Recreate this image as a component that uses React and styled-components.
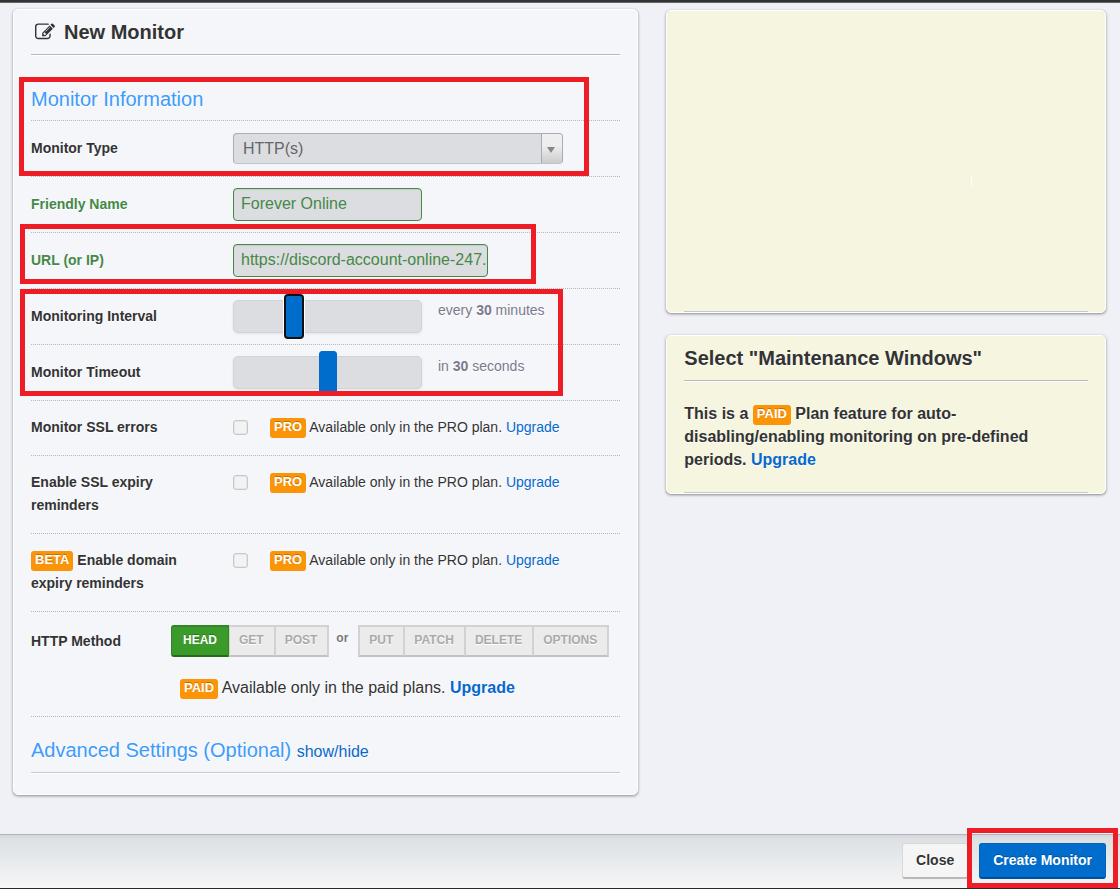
import React, { useState } from "react";
import styled, { createGlobalStyle, css } from "styled-components";

const GlobalStyle = createGlobalStyle`
  *, *::before, *::after { box-sizing: border-box; }
  body {
    margin: 0;
    background: #f0f1f6;
    color: #333;
    font: 14px/23px "Liberation Sans", Arial, sans-serif;
    text-shadow: 0 1px 0 #fff;
  }
  button, input, select { font-family: inherit; }
`;

const Page = styled.div`
  min-height: 100vh;
  display: flex;
  flex-direction: column;
`;

const TopBar = styled.header`
  height: 3px;
  background: #333;
  border-bottom: 1px solid #666;
`;

const Main = styled.main`
  flex: 1;
  display: grid;
  grid-template-columns: minmax(0, 64fr) minmax(0, 45fr);
  gap: 28px;
  align-items: start;
  padding: 6px 14px 24px 13px;
`;

const Card = styled.section`
  padding: 0 17px;
  background: ${(p) => (p.$tone === "note" ? "#f5f5e0" : "#f5f6fa")};
  border: 1px solid #fff;
  border-radius: 5px;
  box-shadow: 0 1px 3px rgba(0, 0, 0, 0.45);
`;

const FormCard = styled(Card).attrs({ as: "form" })`
  padding-bottom: 21px;
`;

const Aside = styled.aside`
  display: grid;
  gap: 22px;
  padding-top: 1px;
`;

const CardTitle = styled.h1`
  display: flex;
  align-items: center;
  gap: 9px;
  margin: 0;
  padding-left: ${(p) => (p.$icon ? "4px" : "0")};
  font-size: 20px;
  font-weight: bold;
  line-height: 44px;
`;

const Rule = styled.hr`
  height: 1px;
  margin: 0;
  border: 0;
  background: ${(p) => (p.$soft ? "#c6c8cd" : "#b8b9bb")};
  box-shadow: 0 1px 0 #fff;
`;

const EmptyNote = styled.div`
  position: relative;
  min-height: 300px;

  &::after {
    content: "";
    position: absolute;
    top: 166px;
    left: 71%;
    width: 1px;
    height: 9px;
    background: #fff;
  }
`;

const NoteText = styled.p`
  margin: 0;
  padding: 21px 0;
  font-size: 16px;
  font-weight: bold;
`;

const SectionTitle = styled.h2`
  margin: 0;
  padding-top: 2px;
  color: #3d9bfb;
  font-size: 20px;
  font-weight: normal;
  line-height: 41px;
`;

const Group = styled.div`
  position: relative;
`;

const FirstGroup = styled(Group)`
  margin-top: 22px;
`;

const Highlight = styled.span`
  position: absolute;
  inset: ${(p) => p.$inset};
  border: 5px solid #ee1c25;
  pointer-events: none;
`;

const Row = styled.div`
  display: flex;
  align-items: center;
  min-height: 56px;
  border-top: 1px dotted #b5b7bd;
`;

const CheckRow = styled(Row)`
  align-items: flex-start;
  min-height: 0;
  padding: 15px 0 16px;
`;

const Label = styled.label`
  flex: none;
  width: 202px;
  padding-right: 50px;
  font-weight: bold;
  color: ${(p) => (p.$valid ? "#468847" : "#333")};
`;

const fieldLook = css`
  background: #dcdde0;
  border-radius: 4px;
  font-size: 16px;
`;

const TextInput = styled.input`
  ${fieldLook}
  width: ${(p) => (p.$wide ? "255px" : "189px")};
  height: 33px;
  padding: 0 1px 1px 7px;
  border: 1px solid #468847;
  color: #468847;
  box-shadow: inset 0 1px 1px rgba(0, 0, 0, 0.08);
  text-shadow: none;
`;

const SelectBox = styled.div`
  position: relative;
  width: 330px;
  height: 31px;
`;

const Select = styled.select`
  ${fieldLook}
  appearance: none;
  width: 100%;
  height: 100%;
  padding: 0 30px 0 9px;
  border: 1px solid #a9abb8;
  border-bottom-color: #c2c4cc;
  color: #666;
  text-shadow: none;
`;

const SelectArrow = styled.span`
  position: absolute;
  inset: 1px 1px 1px auto;
  display: flex;
  align-items: center;
  justify-content: center;
  width: 21px;
  padding-right: 2px;
  padding-top: 3px;
  border-left: 1px solid #a9abb8;
  border-radius: 0 3px 3px 0;
  background: linear-gradient(#eee 40%, #ccc);
  pointer-events: none;
`;

const Slider = styled.input`
  appearance: none;
  width: 189px;
  height: 33px;
  margin: 0;
  background: #dcdde0;
  border: 1px solid #d2d3d6;
  border-radius: 5px;
  box-shadow: 0 1px 3px rgba(0, 0, 0, 0.08);

  &::-webkit-slider-runnable-track {
    height: 31px;
  }
  &::-webkit-slider-thumb {
    appearance: none;
    width: 18px;
    height: 43px;
    margin-top: -6px;
    background: #006dcc;
    border: 1px solid ${(p) => (p.$active ? "#101010" : "#006dcc")};
    border-radius: 3px;
    box-shadow: ${(p) => (p.$active ? "0 0 0 1px #101010, 0 0 0 2px #fff" : "none")};
  }
`;

const Hint = styled.span`
  align-self: flex-start;
  margin: 10px 0 0 16px;
  color: #7a7a8c;
`;

const CheckBox = styled.input`
  appearance: none;
  flex: none;
  width: 15px;
  height: 15px;
  margin: 4px 22px 0 0;
  background: #f3f3f4;
  border: 1px solid #c8c8ca;
  border-radius: 3px;
  box-shadow: inset 0 0 0 1px #e6e6e8;
`;

const Badge = styled.span`
  display: inline-block;
  height: 20px;
  padding: 0 4px;
  border-radius: 3px;
  background: #fb9407;
  color: #fff;
  font-size: 13px;
  font-weight: bold;
  line-height: 17px;
  text-shadow: 0 -1px 0 rgba(0, 0, 0, 0.25);
  vertical-align: middle;
`;

const Link = styled.a`
  color: #0768cd;
  font-weight: ${(p) => (p.$strong ? "bold" : "normal")};
  text-decoration: none;
`;

const ShowHide = styled(Link)`
  font-size: 16px;
`;

const MethodRow = styled(Row)`
  flex-direction: column;
  align-items: stretch;
  padding: 13px 0 17px;
`;

const MethodLine = styled.div`
  display: flex;
  align-items: center;
`;

const MethodLabel = styled.span`
  flex: none;
  width: 140px;
  font-weight: bold;
`;

const Methods = styled.div`
  display: flex;
`;

const Method = styled.button`
  height: 32px;
  padding: 0 ${(p) => (p.$on ? "11px 2px" : "10px 2px 9px")};
  border: 1px solid ${(p) => (p.$on ? "#328526" : "#d2d2d2")};
  border-width: 2px 1px;
  border-bottom-color: ${(p) => (p.$on ? "#27691d" : "#c2c2c2")};
  background: ${(p) => (p.$on ? "#3a9b2a" : "#ebebeb")};
  color: ${(p) => (p.$on ? "#fff" : "#aaa")};
  font-size: 12px;
  font-weight: bold;
  text-shadow: ${(p) => (p.$on ? "0 -1px 0 rgba(0, 0, 0, 0.25)" : "0 1px 0 #fff")};

  &:first-child {
    border-left-width: ${(p) => (p.$on ? "1px" : "2px")};
    border-radius: ${(p) => (p.$on ? "3px 0 0 3px" : "0")};
  }
  &:last-child { border-right-width: 2px; }
`;

const Or = styled.span`
  margin: 0 10px 6px 7px;
  color: #777;
  font-size: 12px;
  font-weight: bold;
  line-height: 20px;
`;

const PlanNote = styled.p`
  margin: 19px 0 0 149px;
  font-size: 16px;
`;

const Advanced = styled.div`
  padding-top: 11px;
  border-top: 1px dotted #b5b7bd;
`;

const Footer = styled.footer`
  display: flex;
  justify-content: flex-end;
  gap: 11px;
  padding: 8px 14px 9px;
  border-top: 1px solid #b3b4b9;
  border-bottom: 1px solid #2b2a2b;
  background: linear-gradient(#d3d7da, #dde1e4 4px, #f5f6f7);
`;

const FooterButton = styled.button`
  height: 36px;
  padding: 0 13px 1px;
  border: 1px solid ${(p) => (p.$primary ? "#0062b8" : "#d8d8d8")};
  border-bottom: 2px solid ${(p) => (p.$primary ? "#004f9e" : "#b8b8b8")};
  border-radius: 3px;
  background: ${(p) => (p.$primary ? "#006dcc" : "#f5f5f5")};
  color: ${(p) => (p.$primary ? "#fff" : "#333")};
  font-size: 14px;
  font-weight: bold;
  text-shadow: ${(p) => (p.$primary ? "0 -1px 0 rgba(0, 0, 0, 0.25)" : "0 1px 0 #fff")};
`;

function EditIcon() {
  return (
    <svg width="20" height="20" viewBox="0 0 1792 1792" fill="#333" aria-hidden="true">
      <path d="M888 1184l116-116-152-152-116 116v56h96v96h56zm440-720q-16-16-33 1l-350 350q-17 17-1 33t33-1l350-350q17-17 1-33zm80 594v190q0 119-84.5 203.5t-203.5 84.5h-832q-119 0-203.5-84.5t-84.5-203.5v-832q0-119 84.5-203.5t203.5-84.5h832q63 0 117 25 15 7 18 23 3 17-9 29l-49 49q-14 14-32 8-23-6-45-6h-832q-66 0-113 47t-47 113v832q0 66 47 113t113 47h832q66 0 113-47t47-113v-126q0-13 9-22l64-64q15-15 35-7t20 29zm-96-738l288 288-672 672h-288v-288zm444 132l-92 92-288-288 92-92q28-28 68-28t68 28l152 152q28 28 28 68t-28 68z" />
    </svg>
  );
}

function ProCheck({ id, children }) {
  return (
    <CheckRow>
      <Label htmlFor={id}>{children}</Label>
      <CheckBox id={id} type="checkbox" disabled />
      <span>
        <Badge>PRO</Badge> Available only in the PRO plan. <Link href="#upgrade">Upgrade</Link>
      </span>
    </CheckRow>
  );
}

export default function App() {
  const [name, setName] = useState("Forever Online");
  const [url, setUrl] = useState("https://discord-account-online-247.");
  const [interval, setIntervalValue] = useState(30);
  const [timeout, setTimeoutValue] = useState(30);

  return (
    <>
      <GlobalStyle />
      <Page>
        <TopBar />
        <Main>
          <FormCard id="monitor-form" onSubmit={(e) => e.preventDefault()}>
            <CardTitle $icon>
              <EditIcon />
              New Monitor
            </CardTitle>
            <Rule />
            <FirstGroup>
              <SectionTitle>Monitor Information</SectionTitle>
              <Row>
                <Label htmlFor="type">Monitor Type</Label>
                <SelectBox>
                  <Select id="type">
                    <option>HTTP(s)</option>
                  </Select>
                  <SelectArrow>
                    <svg width="8" height="6" viewBox="0 0 8 6" aria-hidden="true">
                      <path d="M0 0h8L4 6z" fill="#888" />
                    </svg>
                  </SelectArrow>
                </SelectBox>
              </Row>
              <Highlight $inset="0 31px 0 -12px" />
            </FirstGroup>
            <Row>
              <Label htmlFor="name" $valid>Friendly Name</Label>
              <TextInput id="name" value={name} onChange={(e) => setName(e.target.value)} />
            </Row>
            <Group>
              <Row>
                <Label htmlFor="url" $valid>URL (or IP)</Label>
                <TextInput id="url" $wide value={url} onChange={(e) => setUrl(e.target.value)} />
              </Row>
              <Highlight $inset="-8px 84px 4px -11px" />
            </Group>
            <Group>
              <Row>
                <Label htmlFor="interval">Monitoring Interval</Label>
                <Slider
                  id="interval" type="range" min="0" max="100" $active
                  value={interval} onChange={(e) => setIntervalValue(Number(e.target.value))}
                />
                <Hint>every <b>{interval}</b> minutes</Hint>
              </Row>
              <Row>
                <Label htmlFor="timeout">Monitor Timeout</Label>
                <Slider
                  id="timeout" type="range" min="0" max="60"
                  value={timeout} onChange={(e) => setTimeoutValue(Number(e.target.value))}
                />
                <Hint>in <b>{timeout}</b> seconds</Hint>
              </Row>
              <Highlight $inset="1px 57px 4px -11px" />
            </Group>
            <ProCheck id="ssl-errors">Monitor SSL errors</ProCheck>
            <ProCheck id="ssl-expiry">Enable SSL expiry reminders</ProCheck>
            <ProCheck id="domain-expiry"><Badge>BETA</Badge> Enable domain expiry reminders</ProCheck>
            <MethodRow>
              <MethodLine>
                <MethodLabel id="method-label">HTTP Method</MethodLabel>
                <Methods role="group" aria-labelledby="method-label">
                  <Method type="button" $on>HEAD</Method>
                  <Method type="button" disabled>GET</Method>
                  <Method type="button" disabled>POST</Method>
                </Methods>
                <Or>or</Or>
                <Methods role="group" aria-labelledby="method-label">
                  <Method type="button" disabled>PUT</Method>
                  <Method type="button" disabled>PATCH</Method>
                  <Method type="button" disabled>DELETE</Method>
                  <Method type="button" disabled>OPTIONS</Method>
                </Methods>
              </MethodLine>
              <PlanNote>
                <Badge>PAID</Badge> Available only in the paid plans. <Link href="#upgrade" $strong>Upgrade</Link>
              </PlanNote>
            </MethodRow>
            <Advanced>
              <SectionTitle>
                Advanced Settings (Optional) <ShowHide href="#advanced">show/hide</ShowHide>
              </SectionTitle>
            </Advanced>
            <Rule $soft />
          </FormCard>
          <Aside>
            <Card $tone="note">
              <EmptyNote />
              <Rule $soft />
            </Card>
            <Card $tone="note">
              <CardTitle as="h2">Select "Maintenance Windows"</CardTitle>
              <Rule />
              <NoteText>
                This is a <Badge>PAID</Badge> Plan feature for auto-disabling/enabling monitoring on
                pre-defined periods. <Link href="#upgrade" $strong>Upgrade</Link>
              </NoteText>
              <Rule $soft />
            </Card>
          </Aside>
        </Main>
        <Footer>
          <FooterButton type="button">Close</FooterButton>
          <Group>
            <FooterButton type="submit" form="monitor-form" $primary>Create Monitor</FooterButton>
            <Highlight $inset="-15px -12px -9px -12px" />
          </Group>
        </Footer>
      </Page>
    </>
  );
}
